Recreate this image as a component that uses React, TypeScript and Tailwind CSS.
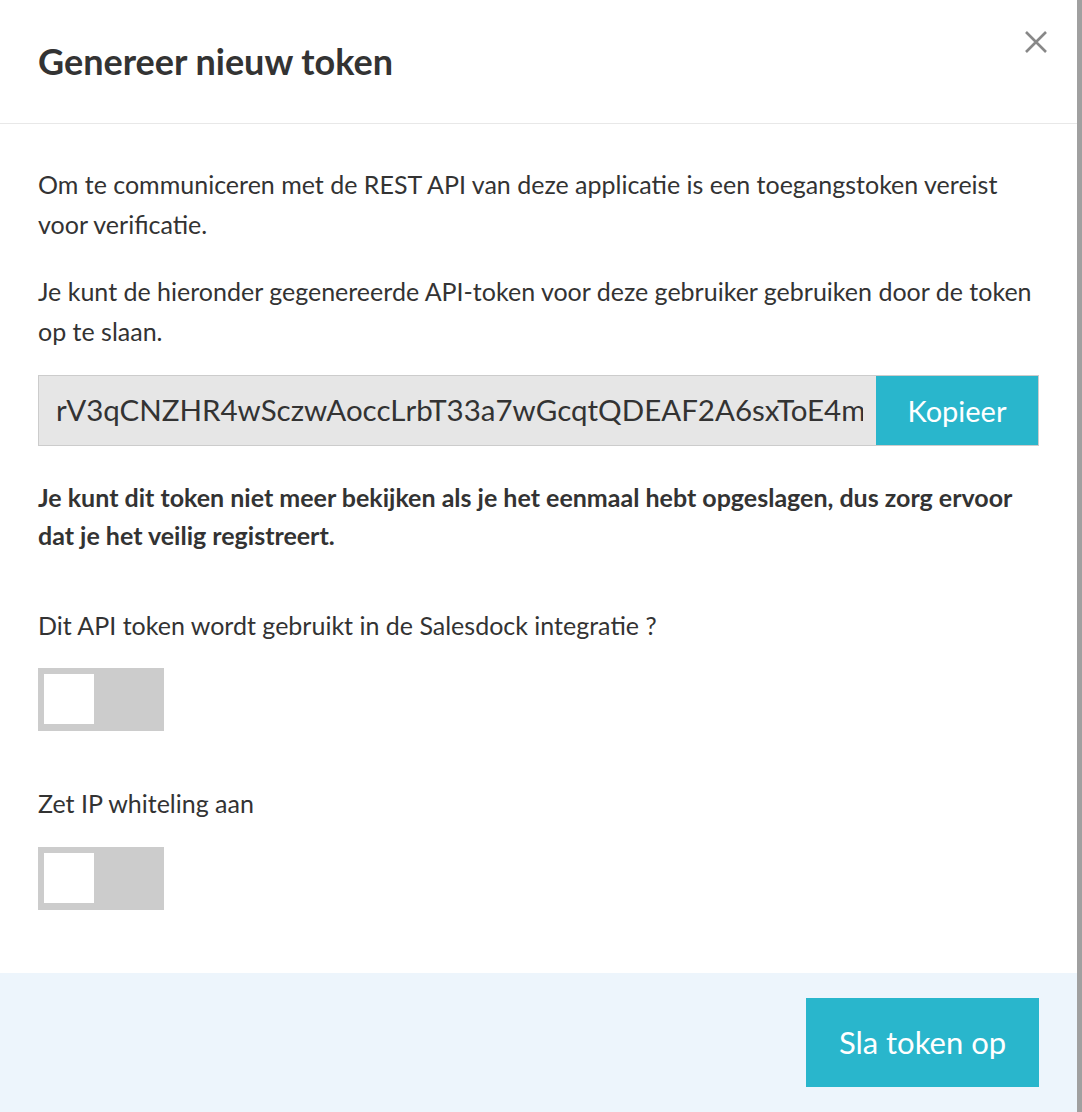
import React from "react";

function Toggle() {
  return (
    <div className="w-[126px] h-[63px] bg-[#cccccc] p-[6px] flex">
      <div className="w-[50px] h-[50px] bg-white" />
    </div>
  );
}

export default function App() {
  return (
    <div className="flex w-[1082px] h-[1112px] bg-white text-[#333333]" style={{ fontFamily: "Lato, 'Noto Sans', sans-serif" }}>
      <div className="w-[1077px] h-full flex flex-col bg-white">
        <div className="h-[124px] border-b border-[#e8e8e8] flex items-start justify-between pl-[38px] pr-[28px] shrink-0">
          <h1 className="text-[36px] font-bold leading-none mt-[43px] text-[#333333]">Genereer nieuw token</h1>
          <button className="mt-[29px] w-[26px] h-[26px] flex items-center justify-center" aria-label="close">
            <svg width="24" height="24" viewBox="0 0 24 24">
              <path d="M2 2 L22 22 M22 2 L2 22" stroke="#888888" strokeWidth="2.6" fill="none" />
            </svg>
          </button>
        </div>
        <div className="flex-1 px-[38px] pt-[40px] text-[25px]">
          <p className="leading-[40px]">
            Om te communiceren met de REST API van deze applicatie is een toegangstoken vereist voor verificatie.
          </p>
          <p className="leading-[40px] mt-[27px]">
            Je kunt de hieronder gegenereerde API-token voor deze gebruiker gebruiken door de token op te slaan.
          </p>
          <div className="mt-[24px] flex h-[71px] border border-[#cccccc] bg-[#e6e6e6]">
            <div className="flex-1 min-w-0 pl-[17px] pr-[13px] flex items-center">
              <div className="overflow-hidden whitespace-nowrap text-[29.5px] text-[#333333]">
                rV3qCNZHR4wSczwAoccLrbT33a7wGcqtQDEAF2A6sxToE4mrK8pQzY7vLn2Xw
              </div>
            </div>
            <button className="w-[162px] bg-[#29b6cc] text-white text-[29px] flex items-center justify-center">
              Kopieer
            </button>
          </div>
          <p className="mt-[32px] font-bold leading-[38px]">
            Je kunt dit token niet meer bekijken als je het eenmaal hebt opgeslagen, dus zorg ervoor dat je het veilig registreert.
          </p>
          <p className="mt-[51px] leading-[40px]">Dit API token wordt gebruikt in de Salesdock integratie ?</p>
          <div className="mt-[23px]">
            <Toggle />
          </div>
          <p className="mt-[52px] leading-[40px]">Zet IP whiteling aan</p>
          <div className="mt-[24px]">
            <Toggle />
          </div>
        </div>
        <div className="h-[139px] bg-[#edf5fc] flex items-start justify-end pr-[38px] pt-[25px] shrink-0">
          <button className="w-[233px] h-[89px] bg-[#29b6cc] text-white text-[31px] flex items-center justify-center">
            Sla token op
          </button>
        </div>
      </div>
      <div className="w-[5px] h-full bg-[#a0a0a0]" />
    </div>
  );
}
